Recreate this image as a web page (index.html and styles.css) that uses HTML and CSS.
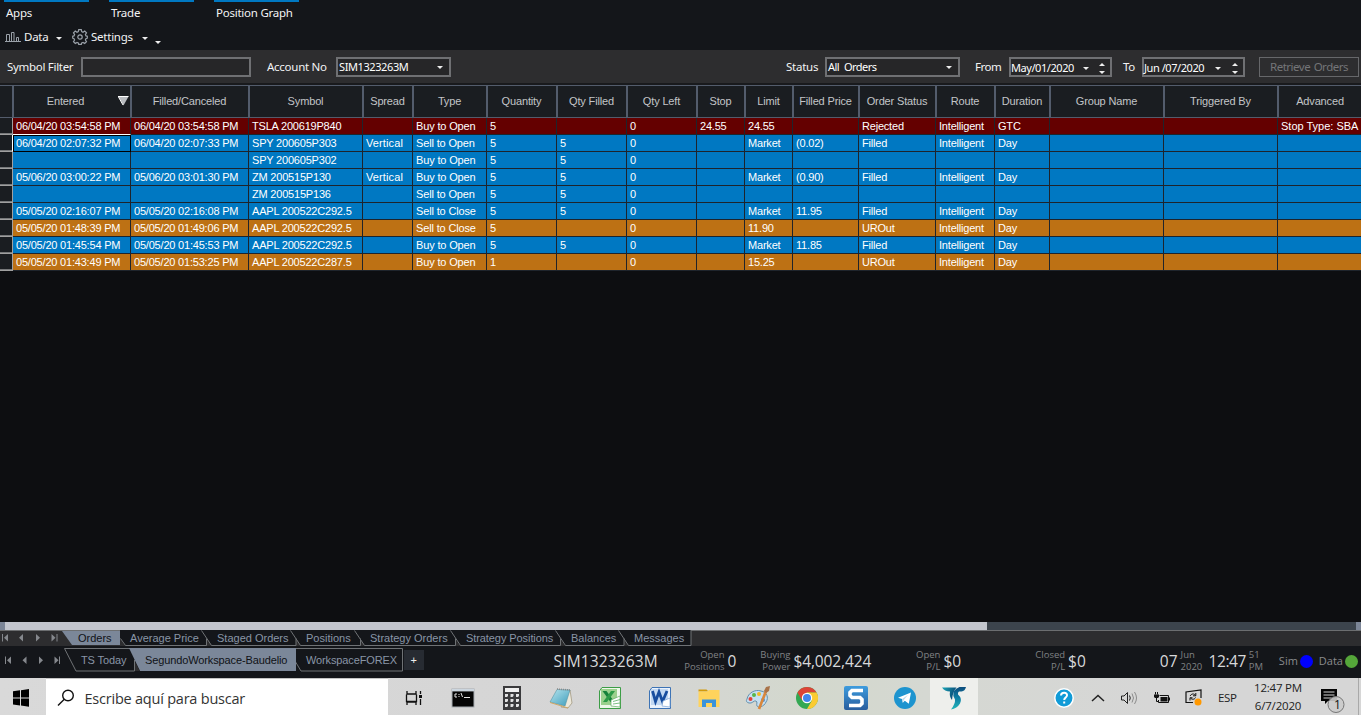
FILE: index.html
```html
<!DOCTYPE html>
<html lang="en">
<head>
<meta charset="utf-8">
<title>Orders</title>
<link rel="stylesheet" href="styles.css">
</head>
<body>
<div class="app">
  <header class="menu">
    <nav class="menu-tabs"><span class="menu-tab">Apps</span><span class="menu-tab">Trade</span><span class="menu-tab">Position Graph</span></nav>
    <div class="tools">
      <svg class="ic-data" width="16" height="12" viewBox="0 0 16 12" fill="none" stroke="#9aa1a9"><path d="M1.500 10V3.500h3V10M6.500 10V1.500h2.500V10M11.500 10V6.500h2V10M0 10.500h16"/></svg>
      <span class="tool-data">Data</span><i class="caret caret-data"></i>
      <svg class="ic-gear" width="16" height="16" viewBox="0 0 16 16" fill="none" stroke="#9aa1a9" stroke-width="1.200"><path d="M6.700.7h2.600l.4 1.900 1.300.6 1.700-1.100 1.800 1.800-1.100 1.700.6 1.300 1.300.3v2l-1.400.5-.5 1.300 1.100 1.700-1.800 1.800-1.700-1.100-1.300.5-.4 1.500H6.700l-.4-1.500-1.300-.5-1.700 1.100-1.800-1.800 1.100-1.700-.6-1.300-1.300-.5v-2L2 6.900l.6-1.300-1.100-1.700 1.800-1.800L5 3.200l1.300-.6z"/><circle cx="8" cy="8" r="2.200"/></svg>
      <span class="tool-settings">Settings</span><i class="caret caret-settings"></i><i class="caret caret-low"></i>
    </div>
  </header>

  <section class="filters">
    <label class="lb-symbol">Symbol Filter</label><div class="field f-symbol"></div>
    <label class="lb-account">Account No</label><div class="field f-account"><span>SIM1323263M</span><i class="caret"></i></div>
    <label class="lb-status">Status</label><div class="field f-status"><span>All&nbsp; Orders</span><i class="caret"></i></div>
    <label class="lb-from">From</label><div class="field f-date f-from"><span>May/01/2020</span><i class="caret"></i><b class="spin"></b></div>
    <label class="lb-to">To</label><div class="field f-date f-to"><span>Jun /07/2020</span><i class="caret"></i><b class="spin"></b></div>
    <div class="retrieve">Retrieve Orders</div>
  </section>

  <table class="orders">
    <colgroup><col class="w13"><col class="w118"><col class="w118"><col class="w114"><col class="w50"><col class="w74"><col class="w70"><col class="w70"><col class="w70"><col class="w48"><col class="w48"><col class="w66"><col class="w77"><col class="w59"><col class="w55"><col class="w114"><col class="w114"><col class="w83"></colgroup>
    <thead><tr><th></th><th class="sorted">Entered<svg class="sort" width="11" height="10" viewBox="0 0 11 10"><path d="M.5.5h10L5.500 9.500z" fill="#b9bcc0"/><path d="M0 .5h10.500M.5 1l4.500 8" stroke="#fff" fill="none"/></svg></th><th>Filled/Canceled</th><th>Symbol</th><th>Spread</th><th>Type</th><th>Quantity</th><th>Qty Filled</th><th>Qty Left</th><th>Stop</th><th>Limit</th><th>Filled Price</th><th>Order Status</th><th>Route</th><th>Duration</th><th>Group Name</th><th>Triggered By</th><th>Advanced</th></tr></thead>
    <tbody>
      <tr class="rejected"><td></td><td class="above-focus">06/04/20 03:54:58 PM</td><td>06/04/20 03:54:58 PM</td><td>TSLA 200619P840</td><td></td><td>Buy to Open</td><td>5</td><td></td><td>0</td><td>24.55</td><td>24.55</td><td></td><td>Rejected</td><td>Intelligent</td><td>GTC</td><td></td><td></td><td>Stop Type: SBA</td></tr>
      <tr class="filled"><td class="beside-focus"></td><td class="focus">06/04/20 02:07:32 PM</td><td>06/04/20 02:07:33 PM</td><td>SPY 200605P303</td><td>Vertical</td><td>Sell to Open</td><td>5</td><td>5</td><td>0</td><td></td><td>Market</td><td>(0.02)</td><td>Filled</td><td>Intelligent</td><td>Day</td><td></td><td></td><td></td></tr>
      <tr class="filled"><td></td><td></td><td></td><td>SPY 200605P302</td><td></td><td>Buy to Open</td><td>5</td><td>5</td><td>0</td><td></td><td></td><td></td><td></td><td></td><td></td><td></td><td></td><td></td></tr>
      <tr class="filled"><td></td><td>05/06/20 03:00:22 PM</td><td>05/06/20 03:01:30 PM</td><td>ZM 200515P130</td><td>Vertical</td><td>Buy to Open</td><td>5</td><td>5</td><td>0</td><td></td><td>Market</td><td>(0.90)</td><td>Filled</td><td>Intelligent</td><td>Day</td><td></td><td></td><td></td></tr>
      <tr class="filled"><td></td><td></td><td></td><td>ZM 200515P136</td><td></td><td>Sell to Open</td><td>5</td><td>5</td><td>0</td><td></td><td></td><td></td><td></td><td></td><td></td><td></td><td></td><td></td></tr>
      <tr class="filled"><td></td><td>05/05/20 02:16:07 PM</td><td>05/05/20 02:16:08 PM</td><td>AAPL 200522C292.5</td><td></td><td>Sell to Close</td><td>5</td><td>5</td><td>0</td><td></td><td>Market</td><td>11.95</td><td>Filled</td><td>Intelligent</td><td>Day</td><td></td><td></td><td></td></tr>
      <tr class="urout"><td></td><td>05/05/20 01:48:39 PM</td><td>05/05/20 01:49:06 PM</td><td>AAPL 200522C292.5</td><td></td><td>Sell to Close</td><td>5</td><td></td><td>0</td><td></td><td>11.90</td><td></td><td>UROut</td><td>Intelligent</td><td>Day</td><td></td><td></td><td></td></tr>
      <tr class="filled"><td></td><td>05/05/20 01:45:54 PM</td><td>05/05/20 01:45:53 PM</td><td>AAPL 200522C292.5</td><td></td><td>Buy to Open</td><td>5</td><td>5</td><td>0</td><td></td><td>Market</td><td>11.85</td><td>Filled</td><td>Intelligent</td><td>Day</td><td></td><td></td><td></td></tr>
      <tr class="urout"><td></td><td>05/05/20 01:43:49 PM</td><td>05/05/20 01:53:25 PM</td><td>AAPL 200522C287.5</td><td></td><td>Buy to Open</td><td>1</td><td></td><td>0</td><td></td><td>15.25</td><td></td><td>UROut</td><td>Intelligent</td><td>Day</td><td></td><td></td><td></td></tr>
    </tbody>
  </table>
  <div class="empty"></div>
  <div class="scroll"><i class="cap"></i><i class="thumb"></i><i class="track"></i><i class="cap"></i></div>

  <div class="strip views">
    <svg class="shapes" width="692" height="16" viewBox="0 0 692 16">
      <path d="M120 0H691V15H120z" fill="#14161a"/>
      <path d="M120 8v8h5zM207 8v8h5zM296 8v8h5zM360 8v8h5zM455 8v8h5zM560 8v8h5zM624 8v8h5z" fill="#2d2d2f"/>
      <path d="M62 1h58v14H72z" fill="#7b8799"/>
      <path d="M120.500 8.500l5 7h81V8.500M201.500.5l10 15h84.500V8.500M290.500.5l10 15h60V8.500M354.500.5l10 15h91V8.500M450.500.5l10 15h100V8.500M555.500.5l10 15h58.500V8.500M618.500.5l10 15h62.500V0" fill="none" stroke="#6f7275"/>
      <path d="M8 4v7.500L4 7.700zM23 4v7.500l-4-3.800zM36 4v7.500l4-3.800zM51.500 4v7.500l4-3.800z" fill="#85888d"/><path d="M2.500 4v7.500M57 4v7.500" stroke="#85888d"/>
    </svg>
    <span class="tab on t1">Orders</span><span class="tab t2">Average Price</span><span class="tab t3">Staged Orders</span><span class="tab t4">Positions</span><span class="tab t5">Strategy Orders</span><span class="tab t6">Strategy Positions</span><span class="tab t7">Balances</span><span class="tab t8">Messages</span>
  </div>

  <div class="strip spaces">
    <svg class="shapes" width="430" height="32" viewBox="0 0 430 32">
      <path d="M64.500 2.500H402.500v22.500H301l-6-10M64.500 2.500L76 25h58.500V14" fill="none" stroke="#6f7275"/>
      <path d="M129 2h167v23H140z" fill="#7b8799"/>
      <path d="M135 16v9h5z" fill="#2d2d2f"/>
      <path d="M404 4h20v20h-20z" fill="#272b32"/>
      <path d="M11 10.500v7.500l-4-3.700zM26.500 10.500v7.500l-4-3.700zM39 10.500v7.500l4-3.700zM54.500 10.500v7.500l4-3.700z" fill="#85888d"/><path d="M5.500 10.500v7.500M59.500 10.500v7.500" stroke="#85888d"/>
    </svg>
    <span class="tab s1">TS Today</span><span class="tab on s2">SegundoWorkspace-Baudelio</span><span class="tab s3">WorkspaceFOREX</span><span class="plus">+</span>
    <div class="status">
      <span class="big st-acct">SIM1323263M</span>
      <span class="duo st-pos">Open<br>Positions</span><span class="big">0</span>
      <span class="duo st-bp">Buying<br>Power</span><span class="big st-bpv">$4,002,424</span>
      <span class="duo st-opl">Open<br>P/L</span><span class="big">$0</span>
      <span class="duo st-cpl">Closed<br>P/L</span><span class="big">$0</span>
      <span class="big st-day">07</span><span class="duo left st-mon">Jun<br>2020</span>
      <span class="big st-time">12:47</span><span class="duo left st-pm">51<br>PM</span>
      <span class="conn st-sim">Sim</span><i class="dot blue"></i><span class="conn st-data">Data</span><i class="dot green"></i>
    </div>
  </div>

  <footer class="taskbar">
    <svg class="win" width="46" height="37" viewBox="0 0 46 37"><path d="M13 13.300l7-1v7.200h-7zM21 12.200l8-1.200v8.500h-8zM13 20.500h7v7l-7-1zM21 20.500h8v8.300l-8-1.200z" fill="#000"/></svg>
    <div class="search"><svg width="18" height="18" viewBox="0 0 18 18" fill="none" stroke="#111" stroke-width="1.400"><circle cx="11" cy="6.500" r="5.300"/><path d="M7.300 10.300L1 16.600"/></svg><span>Escribe aquí para buscar</span></div>
    <div class="apps">
      <div><svg width="18" height="18" viewBox="0 0 18 18" fill="none" stroke="#111" stroke-width="1.300"><path d="M2 2v3h9V2M2 16v-3h9v3M1.500 5.500v7h10v-7M15.500 2v3M15.500 10v6"/><path d="M14 6h3v3h-3z" fill="#111" stroke="none"/></svg></div>
      <div><svg width="24" height="20" viewBox="0 0 24 20"><path d="M.5.500h23v19H.5z" fill="#a8adb2"/><path d="M1 1h22v2H1z" fill="#cbd5de"/><path d="M1.500 3.500h21v15h-21z" fill="#050505"/><path d="M6 6H4v3h2M8 6v1M8 8v1M10 5l1.500 4M13 9.500h6" stroke="#e6e6e6" fill="none"/></svg></div>
      <div><svg width="18" height="24" viewBox="0 0 18 24"><path d="M0 0h18v24H0z" fill="#3b3b3d"/><path d="M2 2h14v4H2z" fill="#f0f0f0"/><g fill="#e2e2e2"><path d="M2 8h3v2l-1 1H2zM7.500 8h3v2l-1 1h-2zM13 8h3v2l-1 1h-2zM2 13h3v2l-1 1H2zM7.500 13h3v2l-1 1h-2zM13 13h3v2l-1 1h-2zM2 18h3v2l-1 1H2zM7.500 18h3v2l-1 1h-2zM13 18h3v2l-1 1h-2z"/></g></svg></div>
      <div><svg width="24" height="24" viewBox="0 0 24 24"><defs><linearGradient id="np" x2="1" y2="1"><stop stop-color="#b7e5ee"/><stop offset="1" stop-color="#3d9cbb"/></linearGradient></defs><path d="M21 4l2 13-4 5-7-1z" fill="#ece8da" stroke="#9a8f75" stroke-width=".7"/><path d="M8 3.500l13 .5-5 16L1 16z" fill="url(#np)" stroke="#5593a5" stroke-width=".6"/><path d="M8 3l13 1" stroke="#888" stroke-dasharray="1 1" stroke-width="1.500"/><path d="M1 16.500l15 4.500 3 1" stroke="#d0a865" fill="none"/></svg></div>
      <div><svg width="24" height="24" viewBox="0 0 24 24"><path d="M4 1.500h18.500v21h-21V5z" fill="#eef7ea" stroke="#3c9d46"/><path d="M3 3h16v16H3z" fill="#9bd08d"/><path d="M4.500 5h4l8 11h-4z" fill="#15813a"/><path d="M13 5h4L9 16H5z" fill="#2d9b47"/><path d="M13 14l9-4v11l-9-1z" fill="#fff" stroke="#62ad63" stroke-width=".7"/><path d="M15 15.500l7-2M15 18l7-1" stroke="#5eb167" stroke-width=".8"/></svg></div>
      <div><svg width="24" height="24" viewBox="0 0 24 24"><path d="M4 1.500h18.500v21h-21V5z" fill="#eaf2fc" stroke="#3d73b5"/><path d="M3 3h17v16H3z" fill="#c2d8f2"/><path d="M4.500 5l3 10.500L11 6l3.500 9.500L19 5" fill="none" stroke="#174d9f" stroke-width="2.800"/><path d="M15 15l7-3v9l-8-1z" fill="#fff" stroke="#7da5d7" stroke-width=".7"/></svg></div>
      <div><svg width="22" height="20" viewBox="0 0 22 20"><path d="M.5 1.500h8l2 2h-10z" fill="#d29a0b"/><path d="M.5 3.500H9l2-1.500h10.500v17H.5z" fill="#ffd35c"/><path d="M4 11.500h14V19h-4v-4H8v4H4z" fill="#3a93db"/></svg></div>
      <div><svg width="26" height="24" viewBox="0 0 26 24"><path d="M2 13c1-6 8-10 14-8 6 1 8 7 5 11-2 5-8 6-9 4s1-4-1-5-4 3-7 2-3-2-2-4z" fill="#c5dff1" stroke="#6490ae"/><circle cx="5.500" cy="13" r="2" fill="#e14238"/><circle cx="9" cy="9" r="2" fill="#58b64a"/><circle cx="14" cy="8" r="2" fill="#f2b923"/><circle cx="18" cy="14" r="2" fill="#4d91d8"/><path d="M21 5l-7 18" stroke="#d8873d" stroke-width="2.700"/><path d="M19 5l2-4 4-1-1 5-3 2z" fill="#a97349"/></svg></div>
      <div><svg width="22" height="22" viewBox="0 0 22 22"><circle cx="11" cy="11" r="11" fill="#34a853"/><path d="M1.470 5.500A11 11 0 0 1 20.530 5.500H11L6.240 13.750z" fill="#dc4437"/><path d="M20.530 5.500A11 11 0 0 1 11 22l4.760-8.250L11 5.500z" fill="#fbcb32"/><circle cx="11" cy="11" r="5.200" fill="#fff"/><circle cx="11" cy="11" r="4" fill="#4286ee"/></svg></div>
      <div><svg width="24" height="24" viewBox="0 0 24 24"><defs><linearGradient id="sn" x2="0" y2="1"><stop stop-color="#3d9cde"/><stop offset="1" stop-color="#285d9d"/></linearGradient></defs><rect width="24" height="24" rx="2" fill="url(#sn)"/><path d="M19 4.500H8L6 6.500v3l2 2h8l2 2v4l-2 2H5" fill="none" stroke="#fff" stroke-width="3.600"/></svg></div>
      <div><svg width="22" height="22" viewBox="0 0 22 22"><circle cx="11" cy="11" r="11" fill="#1d94cf"/><path d="M4 10.800l13-5.300-2.200 11.300-4-3-2 2-.7-3.700z" fill="#fff"/><path d="M8.100 12.100l6-4.400-4.300 5.200-1 2.900z" fill="#bfdcec"/></svg></div>
      <div class="active"><svg width="24" height="24" viewBox="0 0 24 24"><defs><linearGradient id="tl" x2="1" y2=".4"><stop stop-color="#1aa7b8"/><stop offset="1" stop-color="#0a4674"/></linearGradient><linearGradient id="tr" x2="0" y2="1"><stop stop-color="#0d4d7d"/><stop offset=".5" stop-color="#0f80a5"/><stop offset="1" stop-color="#22b5b8"/></linearGradient></defs><path d="M0 1.500h14.500Q10.500 6 10 14 7 10.500 8 5.500 2.500 5.500 0 1.500z" fill="url(#tl)"/><path d="M17.500 1H24q-1 4-4.500 4.500H17q-1.500 1-1 3 4.500 4 2 9-3 5-9 6 4.500-6 4-10-2.500-4-1.500-8Q14 2 17.500 1z" fill="url(#tr)"/></svg></div>
    </div>
    <div class="tray">
      <svg class="help" width="20" height="20" viewBox="0 0 20 20"><circle cx="10" cy="10" r="9.200" fill="#119bd7" stroke="#fff" stroke-width="1.500"/><path d="M7 7.500c.3-4 6.500-3.500 6 0-.2 2-2.800 2-2.800 4.500M10.200 13.500v2" stroke="#fff" stroke-width="2" fill="none"/></svg>
      <svg class="up" width="14" height="8" viewBox="0 0 14 8" fill="none" stroke="#222" stroke-width="1.500"><path d="M1 7l6-5.500L13 7"/></svg>
      <svg class="vol" width="17" height="14" viewBox="0 0 17 14" fill="none" stroke="#222"><path d="M.5 5v4h2.500l3.500 3.500v-11L3 5z"/><path d="M8.500 4.500q1.500 2.500 0 5"/><path d="M11 2.500q3 4.500 0 9M13.500 1q4 6 0 12" stroke="#8a8a8a"/></svg>
      <svg class="bat" width="16" height="12" viewBox="0 0 16 12"><path d="M5.500 3.500h9v7h-10V8" fill="none" stroke="#111"/><path d="M6.500 5h7v4.500h-7zM15 5.500h1v3h-1z" fill="#111"/><path d="M1.500 0v2.500M3.500 0v2.500M2.500 5v4.500H4" stroke="#111" fill="none"/><path d="M0 2.500h5V5L4 6H1L0 5z" fill="#111"/></svg>
      <svg class="upd" width="18" height="17" viewBox="0 0 18 17" fill="none" stroke="#111" stroke-width="1.200"><path d="M8 13.500H1V3l15-2v8"/><path d="M5.200 7c1-2.600 4.300-2.600 5.300-.5M10.800 4v2.800H8M10.500 8.500c-1 2.300-4 2.300-5 .3M5 11.500V8.800h2.500" stroke-width="1"/><circle cx="13" cy="13" r="3.500" fill="#ff9800" stroke="none"/></svg>
      <span class="esp">ESP</span>
      <span class="clock">12:47 PM<br>6/7/2020</span>
      <svg class="note" width="26" height="27" viewBox="0 0 26 27"><path d="M1 2h16v12H8l-3 3v-3H1z" fill="#050505"/><path d="M3.500 5h11M3.500 8h11M3.500 11h8" stroke="#d6d6d6"/><circle cx="16" cy="17.500" r="8" fill="#cbcbcb" fill-opacity=".9" stroke="#777"/></svg><b class="badge">1</b>
      <i class="desk"></i>
    </div>
  </footer>
</div>
</body>
</html>
```
FILE: styles.css
```css
* { box-sizing: border-box; }
body { margin: 0; background: #0d0e11; overflow: hidden; }
svg { display: block; flex: none; }
i, b { font-style: normal; }
.app { width: 1361px; height: 715px; display: flex; flex-direction: column; font-family: "Noto Sans", sans-serif; font-size: 11.5px; letter-spacing: -.24px; color: #f2f3f4; white-space: nowrap; }

.menu { height: 50px; background: #14161a; flex: none; }
.menu-tabs { display: flex; gap: 20px; padding-left: 4px; height: 26px; }
.menu-tab { width: 85px; border-top: 2px solid #0078c2; padding: 3px 0 0 2px; line-height: 16px; }
.tools { display: flex; align-items: center; height: 22px; padding-left: 5px; }
.tool-data { margin: -1px 0 0 3px; width: 24px; }
.caret { width: 0; height: 0; border: 3px solid transparent; border-top: 3px solid #eee; border-bottom: 0; flex: none; }
.caret-data { margin-left: 8px; margin-top: 2px; }
.ic-gear { margin-left: 10px; }
.tool-settings { margin: -1px 0 0 3px; width: 42px; }
.caret-settings { margin-left: 9px; margin-top: 2px; }
.caret-low { margin: 10px 0 0 7px; }

.filters { height: 35px; background: #2d2d2f; border-bottom: 2px solid #191a1d; display: flex; align-items: center; flex: none; padding: 1px 0 0 7px; }
.filters label { padding-bottom: 2px; }
.field { height: 20px; border: 2px solid #6f7073; background: #262628; display: flex; align-items: center; justify-content: space-between; padding: 0 6px 0 1px; flex: none; font-size: 11px; color: #fff; }
.field span { margin-top: -1px; }
.lb-symbol { width: 74px; letter-spacing: -.3px; }
.f-symbol { width: 170px; }
.lb-account { margin-left: 16px; width: 69px; letter-spacing: -.26px; }
.f-account { width: 115px; letter-spacing: -.4px; }
.lb-status { margin-left: 335px; width: 39px; }
.f-status { width: 135px; letter-spacing: -.5px; }
.lb-from { margin-left: 15px; width: 34px; letter-spacing: -.5px; }
.f-date { letter-spacing: -.44px; padding: 2px 5px 0 0; }
.f-from { width: 103px; }
.lb-to { margin-left: 11px; width: 19px; }
.f-to { width: 103px; }
.spin { width: 6px; height: 11px; display: flex; flex-direction: column; justify-content: space-between; }
.spin::before, .spin::after { content: ""; border: 3px solid transparent; border-top: 0; border-bottom: 3px solid #eee; }
.spin::after { border-top: 3px solid #eee; border-bottom: 0; }
.retrieve { margin-left: 14px; width: 100px; height: 20px; border: 1px solid #66676a; color: #747578; text-align: center; line-height: 18px; letter-spacing: -.5px; word-spacing: 1px; }

.orders { width: 1361px; table-layout: fixed; border-collapse: separate; border-spacing: 0; font: 11px/16px "Liberation Sans", sans-serif; letter-spacing: -.2px; flex: none; }
.w13 { width: 13px; } .w118 { width: 118px; } .w114 { width: 114px; } .w50 { width: 50px; } .w74 { width: 74px; } .w70 { width: 70px; } .w48 { width: 48px; } .w66 { width: 66px; } .w77 { width: 77px; } .w59 { width: 59px; } .w55 { width: 55px; } .w83 { width: 83px; }
.orders th { height: 33px; padding: 0 1px 2px 0; font-weight: 400; color: #c3c5c8; background: #1a1d21; border: 1px solid #535c6c; position: relative; letter-spacing: -.15px; }
.orders th:first-child { border-left: 0; }
.orders th:last-child { border-right: 0; padding-right: 0; }
.orders th.sorted { padding-right: 13px; }
.sort { position: absolute; right: 1px; top: 10px; }
.orders td { height: 17px; padding: 0 0 0 3px; border-right: 1px solid #1e242c; border-bottom: 1px solid #1e242c; color: #fff; overflow: hidden; }
.orders td:last-child { border-right: 0; letter-spacing: 0; }
.orders td:nth-child(5) { letter-spacing: .12px; }
.orders td:nth-child(6) { letter-spacing: -.15px; }
.orders tr td:first-child { background: #1a1d21; border-right-color: #a0a0a0; border-bottom-color: #a0a0a0; box-shadow: inset 0 -1px #77797b; }
.orders tr td.beside-focus { border-right-color: #fff; }
.rejected td { background: #640000; }
.orders td.above-focus { border-bottom-color: #fff; }
.filled td { background: #0078c2; }
.urout td { background: #bd7114; }
.orders td.focus { box-shadow: inset 1px 1px #000; border-color: #000; }
.empty { flex: 1; background: #0d0e11; }

.scroll { display: flex; height: 8px; flex: none; }
.cap { width: 5px; background: #7b8597; }
.thumb { width: 982px; background: #c3c6ce; }
.track { flex: 1; background: #3c444d; }

.strip { position: relative; display: flex; flex: none; font-family: "Liberation Sans", sans-serif; font-size: 11px; letter-spacing: 0; }
.shapes { position: absolute; left: 0; top: 0; }
.tab { position: relative; color: #8995a6; flex: none; }
.tab.on { color: #101216; }
.views { height: 16px; background: #2d2d2f; border-top: 1px solid #6c6e70; line-height: 15px; }
.views .shapes { top: -1px; }
.t1 { margin-left: 78px; width: 52px; }
.t2 { width: 87px; }
.t3 { width: 89px; }
.t4 { width: 64px; }
.t5 { width: 96px; }
.t6 { width: 105px; letter-spacing: -.08px; }
.t7 { width: 63px; }
.spaces { height: 32px; background: #14161a; line-height: 28px; }
.spaces .tab { letter-spacing: -.12px; }
.s1 { margin-left: 81px; width: 64px; }
.s2 { width: 161px; }
.s3 { width: 98px; }
.plus { position: relative; width: 20px; text-align: center; color: #eee; }

.status { position: relative; flex: 1; display: flex; align-items: center; padding-bottom: 2px; font-family: "Open Sans", sans-serif; color: #8a8b8d; line-height: 12px; }
.big { font-size: 15.5px; color: #d8d9da; line-height: 30px; }
.duo { font-size: 9.5px; text-align: right; color: #808285; line-height: 12px; margin-right: 3px; }
.duo.left { text-align: left; margin: 0 0 0 3px; }
.conn { font-size: 11px; }
.st-acct { margin-left: 130px; width: 104px; letter-spacing: .15px; }
.st-pos { width: 67px; }
.st-bp { width: 54px; }
.st-bpv { width: 77px; letter-spacing: -.1px; }
.st-opl { width: 70px; }
.st-cpl { width: 104px; }
.st-day { margin-left: 74px; }
.st-mon { width: 28px; }
.st-time { letter-spacing: -.45px; }
.st-pm { width: 30px; }
.dot { width: 13px; height: 13px; border-radius: 50%; margin: 0 6px 0 2px; }
.blue { background: #00f; }
.green { background: #55a63a; margin-right: 3px; }

.taskbar { height: 37px; flex: none; display: flex; background: linear-gradient(90deg, #d9d9d9, #d5d5d5 46%, #d3d8cd 60%, #d5d8d2 68%, #d6d6d6 85%); color: #222; }
.search { width: 342px; background: #fff; border-top: 1px solid #c5c5c5; display: flex; align-items: center; padding: 2px 0 0 11px; font: 14.5px "Open Sans", sans-serif; letter-spacing: -.22px; gap: 10px; color: #333; }
.search span { margin-left: -.5px; }
.apps { display: flex; width: 590px; flex: none; padding: 0 0 0 1.5px; }
.apps div { width: 49.1px; display: flex; align-items: center; justify-content: center; flex: none; padding-top: 2px; }
.apps .active { width: 48px; background: #eeefec; }
.tray { flex: 1; display: flex; align-items: center; position: relative; padding: 2px 0 0 76px; font-family: "Open Sans", sans-serif; font-size: 11.5px; letter-spacing: -.3px; }
.help { margin-top: 1px; }
.up { margin-left: 17px; }
.vol { margin-left: 16px; }
.bat { margin-left: 16px; }
.upd { margin-left: 15px; }
.esp { margin: -1px 0 0 15px; width: 22px; }
.clock { margin: -1px 0 0 13px; width: 50px; text-align: center; line-height: 18px; letter-spacing: -.2px; }
.note { margin: 6px 0 0 17px; }
.badge { position: absolute; left: 356px; top: 19px; font: 12px/16px "Open Sans", sans-serif; color: #111; }
.desk { position: absolute; right: 2px; top: 0; width: 1px; height: 37px; background: #a9a9a9; }
```
